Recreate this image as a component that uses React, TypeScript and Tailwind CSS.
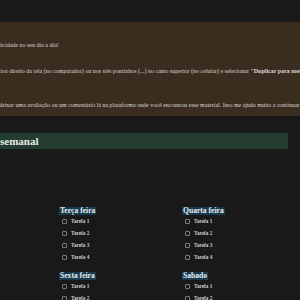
import React from "react";

const serif = { fontFamily: '"Liberation Serif", "DejaVu Serif", serif' };

function Box() {
  return <span className="inline-block w-[5px] h-[5px] border border-[#7a7a7a] rounded-[1px] shrink-0" />;
}

function Day({ name, rows }: { name: string; rows: number }) {
  const items = Array.from({ length: rows }, (_, i) => i + 1);
  return (
    <div className="flex flex-col">
      <div className="h-[8px] flex items-center">
        <span className="bg-[#183a4d] text-[#e6edf2] text-[7.6px] leading-[8px] font-bold px-[1px]">{name}</span>
      </div>
      {items.map((i) => (
        <div key={i} className="h-[12px] flex items-center pl-[3px] gap-[4px]">
          <Box />
          <span className="text-[5.2px] leading-[6px] text-[#cfcfcf] font-bold">Tarefa {i}</span>
        </div>
      ))}
    </div>
  );
}

export default function App() {
  return (
    <div className="w-[300px] h-[300px] bg-[#191919] overflow-hidden" style={serif}>
      <div className="h-[22px]" />
      <div className="h-[94px] bg-[#3a2d20] text-[#d9d4ce] text-[6px] leading-[8px] whitespace-nowrap overflow-hidden">
        <div className="pt-[19px] ml-[-1px]">licidade no seu dia a dia!</div>
        <div className="mt-[18px] ml-[-1px]">
          rior direito da tela (no computador) ou nos três pontinhos (...) no canto superior (no celular) e selecionar <b>"Duplicar para meu espaço"</b>
        </div>
        <div className="mt-[26px] ml-[-1px]">
          deixar uma avaliação ou um comentário lá na plataforma onde você encontrou esse material. Isso me ajuda muito a continuar criando
        </div>
      </div>
      <div className="h-[17px]" />
      <div className="w-[288px] h-[16px] bg-[#243d30] flex items-center">
        <span className="text-[11px] font-bold text-[#e8ece9] leading-[16px]">semanal</span>
      </div>
      <div className="h-[58px]" />
      <div className="flex">
        <div className="ml-[59px] w-[123px] flex flex-col">
          <Day name="Terça feira" rows={4} />
          <div className="mt-[9px]">
            <Day name="Sexta feira" rows={2} />
          </div>
        </div>
        <div className="w-[118px] flex flex-col">
          <Day name="Quarta feira" rows={4} />
          <div className="mt-[9px]">
            <Day name="Sabado" rows={2} />
          </div>
        </div>
      </div>
    </div>
  );
}
